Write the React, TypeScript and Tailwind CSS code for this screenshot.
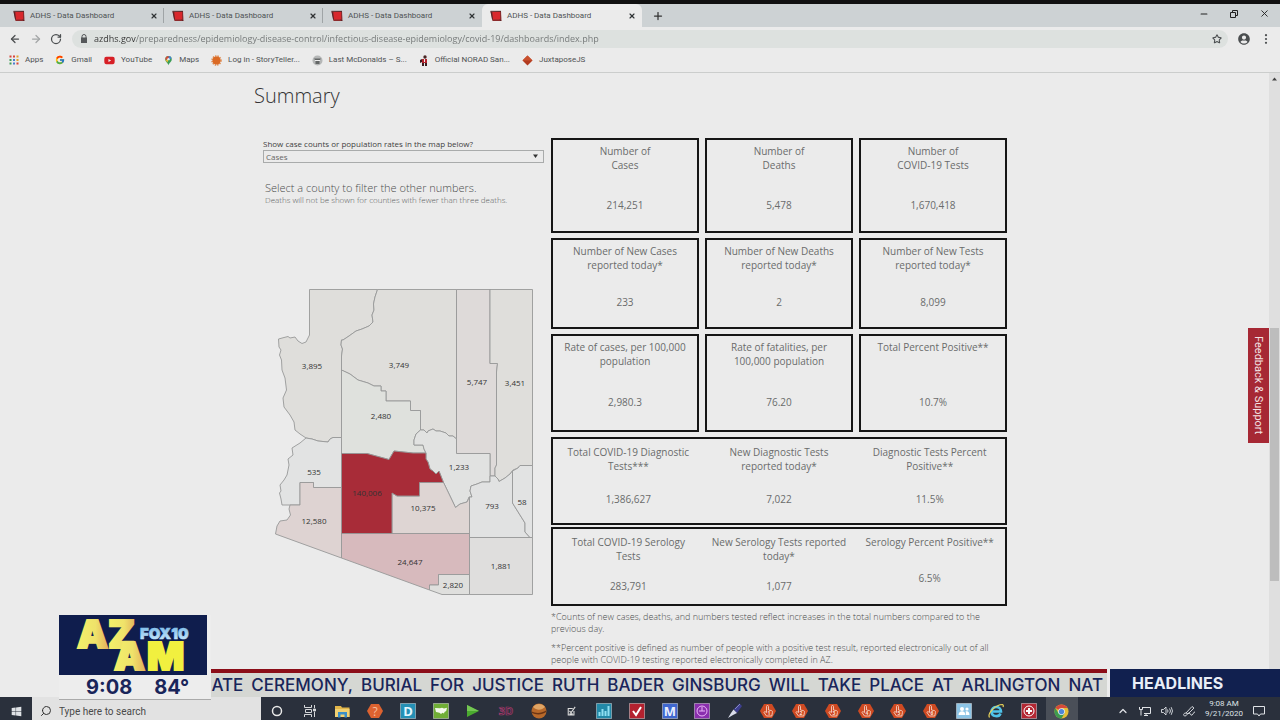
import type { ReactNode } from 'react';
import { ArrowLeft, ArrowRight, ChevronUp, Minus, Plus, RotateCw, Search, Star, X } from 'lucide-react';
import { FcGoogle } from 'react-icons/fc';
import { FaYoutube, FaWindows, FaUserCircle } from 'react-icons/fa';

/* ---------- browser chrome ---------- */

function AdhsIcon() {
  return (
    <svg className="size-3 shrink-0" viewBox="0 0 12 12" aria-hidden="true">
      <path d="M.5 1.500L11 1l.5 10H10L2.500 11z" fill="#8d2a2c" />
      <path d="M2.500 2h7.500v7.500H3z" fill="#d8282d" />
      <path d="M1 1.500l1.500 8M.5 1.300h10.500M10 9.500l1 1.500" stroke="#4a2022" strokeWidth=".8" fill="none" />
    </svg>
  );
}

function Tab({ active }: { active?: boolean }) {
  return (
    <div
      role="tab"
      aria-selected={!!active}
      className={
        active
          ? 'flex w-40 items-center gap-1 rounded-t-md bg-[#ebebeb] pt-px pr-1.5 pl-2'
          : 'flex w-[159px] items-center gap-1 pt-px pr-1.5 pl-2'
      }
    >
      <AdhsIcon />
      <span className="flex-1 truncate pl-px text-[8px] leading-3 text-[#4f5355]">ADHS - Data Dashboard</span>
      <button aria-label="Close tab" className="text-[#303335]">
        <X className="size-2" strokeWidth={3.500} />
      </button>
    </div>
  );
}

function TabStrip() {
  return (
    <div className="flex h-[23px] shrink-0 items-stretch bg-[#cdd2d4] pl-[5px] font-[Roboto,sans-serif]">
      <div role="tablist" className="flex">
        <Tab />
        <span className="-ml-px my-1 w-px bg-[#9fa4a6]" />
        <Tab />
        <span className="-ml-px my-1 w-px bg-[#9fa4a6]" />
        <Tab />
        <Tab active />
      </div>
      <button aria-label="New tab" className="ml-2.5 text-[#333]">
        <Plus className="size-3" strokeWidth={2.500} />
      </button>
      <div className="ml-auto flex items-center gap-5 pr-2.5 pb-1 text-[#222]">
        <button aria-label="Minimize"><Minus width={10} height={10} strokeWidth={2.500} /></button>
        <button aria-label="Restore">
          <svg width="10" height="10" viewBox="0 0 10 10" fill="none" stroke="currentColor" aria-hidden="true">
            <path d="M1.500 3.500h5v5h-5zM3.500 3V1.500h5v5H7" />
          </svg>
        </button>
        <button aria-label="Close window"><X width={11} height={11} strokeWidth={2} /></button>
      </div>
    </div>
  );
}

const URL_TEXT =
  'azdhs.gov/preparedness/epidemiology-disease-control/infectious-disease-epidemiology/covid-19/dashboards/index.php';

function AddressBar() {
  return (
    <div className="flex h-[23px] shrink-0 items-center bg-[#ebebeb] pl-2 text-[#4b4e50]">
      <button aria-label="Back" className="px-px"><ArrowLeft className="size-3" strokeWidth={2.500} /></button>
      <button aria-label="Forward" className="ml-2 text-[#a3a6a7]"><ArrowRight className="size-3" strokeWidth={2.500} /></button>
      <button aria-label="Reload" className="ml-2"><RotateCw className="size-3" strokeWidth={2.500} /></button>
      <div className="ml-2.5 flex h-[18px] flex-1 items-center rounded-full bg-[#dde1df] pr-1.5 pl-2">
        <svg width="8" height="9" viewBox="0 0 8 9" aria-hidden="true">
          <path d="M2 4V2.500a2 2 0 0 1 4 0V4" fill="none" stroke="#55585a" />
          <path d="M1 3.500h6V9H1z" fill="#55585a" />
        </svg>
        <input
          aria-label="Address"
          defaultValue={URL_TEXT}
          className="ml-1.5 min-w-0 flex-1 bg-linear-[to_right,#333_42px,#727676_42px] bg-clip-text text-[9px] text-transparent outline-none"
        />
        <button aria-label="Bookmark this page"><Star className="size-2.5" strokeWidth={2.500} /></button>
      </div>
      <button aria-label="Profile" className="ml-2.5"><FaUserCircle className="size-3" /></button>
      <button aria-label="Menu" className="mr-3 ml-3.5">
        <svg width="4" height="10" viewBox="0 0 4 10" fill="currentColor" aria-hidden="true">
          <circle cx="2" cy="1.200" r="1.100" /><circle cx="2" cy="5" r="1.100" /><circle cx="2" cy="8.800" r="1.100" />
        </svg>
      </button>
    </div>
  );
}

function AppsIcon() {
  const colors = ['#d8453a', '#d8453a', '#e0a12c', '#3f9a54', '#4a7fd0', '#e0a12c', '#3f9a54', '#4a7fd0', '#d8453a'];
  return (
    <svg width="10" height="10" viewBox="0 0 10 10" aria-hidden="true">
      {colors.map((c, i) => (
        <rect key={i} x={(i % 3) * 3.500 + 0.500} y={Math.floor(i / 3) * 3.500 + 0.500} width="2" height="2" fill={c} />
      ))}
    </svg>
  );
}

function MapsIcon() {
  return (
    <svg width="9" height="11" viewBox="0 0 10 11" aria-hidden="true">
      <path d="M5 .5a3.600 3.600 0 0 1 3.600 3.600C8.600 7 6 7.500 5 10.800 4 7.500 1.400 7 1.400 4.100A3.600 3.600 0 0 1 5 .5z" fill="#3c9d55" />
      <path d="M5 .5a3.600 3.600 0 0 1 3.400 2.400L5 5z" fill="#4580db" />
      <path d="M5 .5L5 4 1.400 4.600C1.200 2.300 3 .5 5 .5z" fill="#d9483b" />
      <path d="M1.700 5.500L5 3.500 4 7.800z" fill="#e9b92f" />
      <circle cx="5" cy="4" r="1.300" fill="#ebebeb" />
    </svg>
  );
}

const bookmarks: { label: string; icon: ReactNode }[] = [
  { label: 'Apps', icon: <AppsIcon /> },
  { label: 'Gmail', icon: <FcGoogle size={10} /> },
  { label: 'YouTube', icon: <FaYoutube size={11} color="#d71f26" /> },
  { label: 'Maps', icon: <MapsIcon /> },
  {
    label: 'Log in - StoryTeller...',
    icon: (
      <svg width="11" height="11" viewBox="0 0 11 11" aria-hidden="true">
        <circle cx="5.500" cy="5.500" r="4.500" fill="none" stroke="#dc8a50" strokeWidth="1.500" strokeDasharray="1.400 1" />
        <circle cx="5.500" cy="5.500" r="4" fill="#db6a25" />
      </svg>
    ),
  },
  {
    label: 'Last McDonalds – S...',
    icon: (
      <svg width="11" height="11" viewBox="0 0 11 11" aria-hidden="true">
        <circle cx="5.500" cy="5.500" r="5" fill="#b5b7b7" />
        <path d="M2 3.500h7L8 5H3zM3.500 6h4v3h-4z" fill="#646767" />
        <path d="M3 5.500h5" stroke="#eee" />
      </svg>
    ),
  },
  {
    label: 'Official NORAD San...',
    icon: (
      <svg width="10" height="11" viewBox="0 0 10 11" aria-hidden="true">
        <circle cx="6" cy="2" r="1.700" fill="#4a2524" />
        <path d="M3 4h5v4H3z" fill="#b3222c" />
        <path d="M1 5l2-1v3l-2 1zM3 8h2v3H3zM6 8h2v3H6z" fill="#3a1c20" />
        <path d="M5 4h1v3H5z" fill="#eee" />
      </svg>
    ),
  },
  {
    label: 'JuxtaposeJS',
    icon: (
      <svg width="11" height="11" viewBox="0 0 11 11" aria-hidden="true">
        <path d="M5.500 .5l5 5-5 5-5-5z" fill="#b23a1f" />
        <path d="M5.500 .5l5 5h-10z" fill="#c9502d" />
      </svg>
    ),
  },
];

function Bookmarks() {
  return (
    <nav aria-label="Bookmarks" className="flex h-[23px] shrink-0 items-start gap-3 border-b border-[#cbcdcc] bg-[#ebebeb] pt-[3px] pl-[9px] font-[Roboto,sans-serif]">
      {bookmarks.map((b) => (
        <a key={b.label} href="#" className="flex h-3.5 items-center gap-1.5 text-[8px] whitespace-nowrap text-[#4f5254]">
          {b.icon}
          {b.label}
        </a>
      ))}
    </nav>
  );
}

/* ---------- county map ---------- */

const counties: { name: string; value: string; x: number; y: number; fill: string; d: string }[] = [
  { name: 'Mohave', value: '3,895', x: 312, y: 366, fill: '#dfdedb', d: 'M309.500 289.500H377.500L375 297 373.500 304 374 310 372 315 373 322 369 326 362 329 356 331 349 336 343 340 341.500 340 341 345 342.500 349 341.500 356 341.500 370V437.500H333L330 439 328 442 318 441 312 439 306 438 300 434 295 430 294 422 290 415 284 407 283 398 286.500 390 285 378 282 370 281.500 360 279.500 355 281 350 279 347 278.500 339 284 337.500 288 336.500 290 338 295 337 298 341 302 343.500 306 342 309.500 335Z' },
  { name: 'Coconino', value: '3,749', x: 399, y: 365, fill: '#dfdedb', d: 'M377.500 289.500H456.500V439L453 436 449 436 446 433 440 431 436 431 433 429 428 431 427 433 424 430 420.500 430V410.500H410.500V401H386V391H381V386L374 386 368 383 358 380 350 374 341.500 370V356L342.500 349 341 345 341.500 340 343 340 349 336 356 331 362 329 369 326 373 322 372 315 374 310 373.500 304 375 297Z' },
  { name: 'Navajo', value: '5,747', x: 477, y: 382, fill: '#dedad9', d: 'M456.500 289.500H490V363.500H497.500L496.500 372V465L495 468V476H490V453.500H456.500Z' },
  { name: 'Apache', value: '3,451', x: 515, y: 383, fill: '#dfdedb', d: 'M490 289.500H532.500V465.500H520L518 468 513 470 510 474 505 478 499 481.500 498 479 495 476V468L496.500 465V372L497.500 363.500H490Z' },
  { name: 'Yavapai', value: '2,480', x: 381, y: 416, fill: '#dfe1dd', d: 'M341.500 370L350 374 358 380 368 383 374 386H381V391H386V401H410.500V410.500H420.500V430L416 434 414 440V445H423L424 449 426 453H413L394 451 389 459.500 367 453.500H341.500Z' },
  { name: 'Gila', value: '1,233', x: 459, y: 467, fill: '#e1e2e1', d: 'M420.500 430L424 430 427 433 428 431 433 429 436 431 440 431 446 433 449 436 453 436 456.500 439V453.500H490V482L482 482 477 484 471 486 470 491 472 497 469 497 467 502 460 504 455.500 507.500 450 496 443.500 482.500 439 471 436 474 430 469 428 462 426 459V453L424 449 423 445H414V440L416 434Z' },
  { name: 'La Paz', value: '535', x: 314, y: 472, fill: '#e2e3e3', d: 'M306 438L312 439 318 441 328 442 330 439 333 437.500H341.500V487.500H313.500V482.500H300V505H282L281 499 279.500 493 281 491 280 485 284 480 287 475 289 465 288 459 293 455 292 448 300 443Z' },
  { name: 'Yuma', value: '12,580', x: 314, y: 521, fill: '#ded3d2', d: 'M300 482.500H313.500V487.500H341.500V558L275.500 534 277 526 280 521 287 520 290.500 515 289 509 290 505H300Z' },
  { name: 'Pinal', value: '10,375', x: 423, y: 508, fill: '#ded5d3', d: 'M392 493L397 496H419.500V482.500H443.500L450 496 455.500 507.500 460 504 467 502 469.500 497V533.500H392Z' },
  { name: 'Graham', value: '793', x: 492, y: 506, fill: '#e1e2e2', d: 'M469.500 537.500V497H472L470 491 471 486 477 484 482 482H490V476H495L498 479 499 481.500 505 478 510 474 512.500 471V503L520 515 525 523 525 532 530 537.500Z' },
  { name: 'Greenlee', value: '58', x: 522, y: 502, fill: '#e2e3e3', d: 'M520 465.500H532.500V537.500H530L525 532V523L520 515 512.500 503V471L518 468Z' },
  { name: 'Pima', value: '24,647', x: 410, y: 562, fill: '#d7babd', d: 'M341.500 533.500H469.500V574.500H438.500V585H429.500V590L341.500 558Z' },
  { name: 'Cochise', value: '1,881', x: 501, y: 566, fill: '#dfdedd', d: 'M469.500 537.500H532.500V594.500H469.500Z' },
  { name: 'Santa Cruz', value: '2,820', x: 453, y: 585, fill: '#dfdfdd', d: 'M438.500 574.500H469.500V594.500H442L429.500 590V585H438.500Z' },
  { name: 'Maricopa', value: '140,006', x: 367, y: 493, fill: '#a82c38', d: 'M341.500 453.500H367L389 459.500 394 451 413 453H426V459L428 462 430 469 433 471 436 474 439 471 443.500 482.500H419.500V496H397L392 493V533.500H341.500Z' },
];

function CountyMap() {
  return (
    <svg role="img" aria-label="Cases by county" className="ml-5 block w-[260px]" viewBox="274 288 260 308">
      {counties.map((c) => (
        <path key={c.name} d={c.d} fill={c.fill} stroke="#979998" strokeWidth="0.900" />
      ))}
      {counties.map((c) => (
        <text key={c.name} x={c.x} y={c.y + 3} textAnchor="middle" className="fill-[#333] text-[8px]">
          {c.value}
        </text>
      ))}
    </svg>
  );
}

/* ---------- dashboard ---------- */

function Stat({ title, value, gap }: { title: string[]; value: string; gap: string }) {
  return (
    <>
      <h2>
        {title.map((line) => (
          <span key={line} className="block whitespace-nowrap">{line}</span>
        ))}
      </h2>
      <p className={gap}>{value}</p>
    </>
  );
}

function Card({ title, value, size, gap }: { title: string[]; value: string; size: string; gap: string }) {
  return (
    <section className={`border-2 border-[#151515] pt-1 text-center ${size}`}>
      <Stat title={title} value={value} gap={gap} />
    </section>
  );
}

function Summary() {
  return (
    <main className="mx-auto flex w-full max-w-[761px] flex-col text-[#6a6c6c]">
      <h1 className="mt-[9px] text-[20px] leading-7 font-light text-[#333]">Summary</h1>
      <div className="mt-7 flex">
        <div className="w-[297px] shrink-0">
          <div className="ml-[9px] w-[281px]">
            <label htmlFor="measure" className="block text-[8px] leading-3 text-[#3f4141]">
              Show case counts or population rates in the map below?
            </label>
            <div className="relative">
              <select
                id="measure"
                className="block h-[13px] w-full appearance-none border border-[#a9abab] pl-0.5 text-[8px] leading-[11px] text-[#666]"
              >
                <option>Cases</option>
                <option>Rates</option>
              </select>
              <svg className="pointer-events-none absolute top-1 right-1.5" width="5" height="4" viewBox="0 0 5 4" aria-hidden="true">
                <path d="M0 .5h5L2.500 4z" fill="#333" />
              </svg>
            </div>
            <p className="mt-[18px] ml-0.5 text-[11px] leading-[14px] font-light text-[#4c4e4e]">Select a county to filter the other numbers.</p>
            <p className="ml-0.5 text-[8px] leading-[10px] font-light whitespace-nowrap text-[#5c5e5e]">
              Deaths will not be shown for counties with fewer than three deaths.
            </p>
          </div>
          <div className="mt-[83px]">
            <CountyMap />
          </div>
        </div>

        <div className="w-[456px] shrink-0 text-[10px] leading-[14px]">
          <div className="grid grid-cols-3 gap-x-1.5 gap-y-[5px]">
            <Card title={['Number of', 'Cases']} value="214,251" size="h-[95px]" gap="mt-[26px]" />
            <Card title={['Number of', 'Deaths']} value="5,478" size="h-[95px]" gap="mt-[26px]" />
            <Card title={['Number of', 'COVID-19 Tests']} value="1,670,418" size="h-[95px]" gap="mt-[26px]" />
            <Card title={['Number of New Cases', 'reported today*']} value="233" size="h-[91px]" gap="mt-[23px]" />
            <Card title={['Number of New Deaths', 'reported today*']} value="2" size="h-[91px]" gap="mt-[23px]" />
            <Card title={['Number of New Tests', 'reported today*']} value="8,099" size="h-[91px]" gap="mt-[23px]" />
            <Card title={['Rate of cases, per 100,000', 'population']} value="2,980.3" size="h-[98px]" gap="mt-[27px]" />
            <Card title={['Rate of fatalities, per', '100,000 population']} value="76.20" size="h-[98px]" gap="mt-[27px]" />
            <Card title={['Total Percent Positive**']} value="10.7%" size="h-[98px]" gap="mt-[41px]" />
          </div>
          <section className="mt-[5px] grid h-[88px] grid-cols-3 border-2 border-[#151515] pt-1.5 text-center">
            <div><Stat title={['Total COVID-19 Diagnostic', 'Tests***']} value="1,386,627" gap="mt-[19px]" /></div>
            <div><Stat title={['New Diagnostic Tests', 'reported today*']} value="7,022" gap="mt-[19px]" /></div>
            <div><Stat title={['Diagnostic Tests Percent', 'Positive**']} value="11.5%" gap="mt-[19px]" /></div>
          </section>
          <section className="mt-0.5 grid h-[79px] grid-cols-3 border-2 border-[#151515] pt-1.5 text-center">
            <div><Stat title={['Total COVID-19 Serology', 'Tests']} value="283,791" gap="mt-4" /></div>
            <div><Stat title={['New Serology Tests reported', 'today*']} value="1,077" gap="mt-4" /></div>
            <div><Stat title={['Serology Percent Positive**']} value="6.5%" gap="mt-[22px]" /></div>
          </section>
          <div className="mt-[5px] text-[9px] leading-3 font-light text-[#4c4e4e]">
            <p>*Counts of new cases, deaths, and numbers tested reflect increases in the total numbers compared to the previous day.</p>
            <p className="mt-[7px]">
              **Percent positive is defined as number of people with a positive test result, reported electronically out of all people with COVID-19 testing reported electronically completed in AZ.
            </p>
          </div>
        </div>
      </div>
    </main>
  );
}

/* ---------- broadcast graphics ---------- */

function Ticker() {
  const words = 'ATE CEREMONY, BURIAL FOR JUSTICE RUTH BADER GINSBURG WILL TAKE PLACE AT ARLINGTON NAT'.split(' ');
  return (
    <div className="absolute right-0 bottom-[23px] left-[211px] flex h-7 font-[Inter,sans-serif]">
      <div className="flex min-w-0 flex-1 items-center justify-end gap-2 overflow-hidden border-t-4 border-[#8b0d18] bg-[#d5d7d3] pr-1 text-[17px] leading-6 font-medium text-[#19255a]">
        {words.map((w) => (
          <span key={w}>{w}</span>
        ))}
      </div>
      <div className="w-[3px] bg-[#ececec]" />
      <div className="flex w-[170px] shrink-0 items-center bg-[#11204f] pl-[22px] text-[16px] font-bold text-[#e9eef8]">HEADLINES</div>
    </div>
  );
}

function StationBug() {
  return (
    <div className="absolute bottom-5 left-[59px] w-[152px] border-b border-[#aaa] bg-[#ededed] font-[Inter,sans-serif]">
      <svg className="block w-[148px] bg-[#0f1d4d]" viewBox="0 0 148 60" role="img" aria-label="AZ AM FOX10">
        <defs>
          <linearGradient id="gold" x1="0" y1="0" x2="1" y2="0">
            <stop offset="0" stopColor="#f3f06a" />
            <stop offset="0.600" stopColor="#efe26a" />
            <stop offset="1" stopColor="#e3b25c" />
          </linearGradient>
          <linearGradient id="ice" x1="0" y1="0" x2="0" y2="1">
            <stop offset="0" stopColor="#6fb2e4" />
            <stop offset="1" stopColor="#d4efff" />
          </linearGradient>
        </defs>
        <g fontWeight="900" fontSize="39" fill="url(#gold)" stroke="url(#gold)" strokeWidth="2">
          <text x="18" y="33">A</text>
          <text x="49" y="33">Z</text>
          <text x="55" y="55">A</text>
          <text x="88" y="55" fill="#f1f03f" stroke="#f1f03f">M</text>
        </g>
        <text x="81" y="24" fontSize="15" fontWeight="900" fill="url(#ice)" stroke="url(#ice)" strokeWidth=".6">FOX10</text>
      </svg>
      <div className="flex h-6 items-center gap-[22px] pl-[27px] text-[20px] font-bold text-[#19255a]">
        <span>9:08</span>
        <span>84°</span>
      </div>
    </div>
  );
}

/* ---------- taskbar ---------- */

function Tile({ from, children }: { from: string; children: ReactNode }) {
  return (
    <svg width="16" height="16" viewBox="0 0 16 16" fill="none" aria-hidden="true">
      <rect x=".5" y=".5" width="15" height="15" fill={from} stroke="#ffffff66" />
      {children}
    </svg>
  );
}

function HexHand({ n }: { n: string }) {
  return (
    <svg width="16" height="16" viewBox="0 0 16 16" fill="none" aria-hidden="true">
      <path d="M4 1h8l4 7-4 7H4L0 8z" fill="#cf4a22" />
      <path d="M6.500 9V3.500a1 1 0 0 1 2 0V7l3 .6c1 .3 1 1 .9 2L11.800 13H6.500L4 9.500c0-1 1-1.200 2.500 0z" stroke="#f6cfc0" strokeWidth=".9" />
      <text x="7.500" y="12" fontSize="5" fontWeight="700" fill="#f9ded3">{n}</text>
    </svg>
  );
}

const apps: { name: string; icon: ReactNode }[] = [
  { name: 'Cortana', icon: <svg width="12" height="12" viewBox="0 0 12 12" aria-hidden="true"><circle cx="6" cy="6" r="4.500" fill="none" stroke="#e8e8e8" strokeWidth="1.500" /></svg> },
  { name: 'Task View', icon: <svg width="12" height="12" viewBox="0 0 12 12" fill="none" stroke="#d5d7da" aria-hidden="true"><path d="M.5 0v2.500h7V0M1.500 4.500h6v3h-6zM.5 12V9.500h7V12M10.500 0v3M10.500 7v5" /><path d="M9.500 4h2v2h-2z" fill="#d5d7da" /></svg> },
  { name: 'File Explorer', icon: <svg width="15" height="13" viewBox="0 0 15 13" aria-hidden="true"><path d="M0 1h6l1 1.500h7.500V12H0z" fill="#e2b64a" /><path d="M0 4h14.500v8H0z" fill="#f2d172" /><path d="M3 7h9v5.500H9.500V9.500h-4v3H3z" fill="#3a8fc8" /></svg> },
  { name: 'Help', icon: <svg width="16" height="16" viewBox="0 0 16 16" aria-hidden="true"><path d="M4 1h8l4 7-4 7H4L0 8z" fill="#dc6230" /><text x="8" y="12.500" textAnchor="middle" fontSize="12" fill="#f6bf9f">?</text></svg> },
  { name: 'Dashboard D', icon: <Tile from="#2590b5"><text x="8" y="13" textAnchor="middle" fontSize="13" fontWeight="700" fill="#e4f8ff">D</text></Tile> },
  { name: 'Maps US', icon: <Tile from="#6fae35"><path d="M2 5l5 .3 2-.6 2 .8 3-.8-.8 3.300-1.700 1-.5 1.500-1.500-.8-1.500 1.300-1.500-1.200L3 9z" fill="#f3f9ea" /></Tile> },
  { name: 'Player', icon: <svg width="14" height="14" viewBox="0 0 14 14" aria-hidden="true"><path d="M1 1l12 6L1 13z" fill="#4aa92f" /><path d="M1 1l12 6H1z" fill="#74c653" /></svg> },
  { name: '3D', icon: <svg width="16" height="14" viewBox="0 0 16 14" aria-hidden="true"><text x="8" y="11" textAnchor="middle" fontSize="11" fontWeight="700" fill="#3b2238" stroke="#a0406f" strokeWidth=".7">3D</text></svg> },
  { name: 'Globe', icon: <svg width="16" height="16" viewBox="0 0 16 16" aria-hidden="true"><circle cx="8" cy="8" r="7.500" fill="#b8692a" /><path d="M2 4a7.500 7.500 0 0 1 12 0C11 7 6 8 2 4z" fill="#e0a565" /><path d="M.6 8.500c4 2 10 2 14.500-1v1.500c-4 3-10 3-14.300 1z" fill="#6b3413" /></svg> },
  { name: 'Checklist', icon: <svg width="9" height="10" viewBox="0 0 11 12" fill="none" stroke="#dcdcdc" strokeWidth="1.300" aria-hidden="true"><path d="M7 3H1.500v8h7V6M3 6l2 2 5-7M3 9.500h4" /></svg> },
  { name: 'Charts', icon: <Tile from="#2289a8"><path d="M3.500 13V9M6.500 13V6M9.500 13V8M12.500 13V3" stroke="#8fe0f2" strokeWidth="2" /></Tile> },
  { name: 'Tasks', icon: <Tile from="#b3212f"><path d="M4 8l3 4 5-8" stroke="#fff" strokeWidth="2" /></Tile> },
  { name: 'Mail M', icon: <Tile from="#3f67cf"><text x="8" y="13" textAnchor="middle" fontSize="13" fontWeight="700" fill="#e9efff">M</text></Tile> },
  { name: 'Clock', icon: <Tile from="#8a2fae"><circle cx="8" cy="8" r="5" stroke="#e9b6f7" /><path d="M8 4v4M5 8h6" stroke="#e9b6f7" /></Tile> },
  { name: 'Pen', icon: <svg width="16" height="16" viewBox="0 0 16 16" aria-hidden="true"><path d="M6.500 6.500l6-6 2.500 2.500-5 7z" fill="#3d3f8f" /><path d="M8 6l5-5" stroke="#8688c4" /><path d="M6.500 6.500l3.500 3.500-4 2-5 3 3-5z" fill="#d9dcea" /></svg> },
  { name: 'Touch 1', icon: <HexHand n="1" /> },
  { name: 'Touch 2', icon: <HexHand n="2" /> },
  { name: 'Touch 3', icon: <HexHand n="3" /> },
  { name: 'Touch 4', icon: <HexHand n="4" /> },
  { name: 'Touch 5', icon: <HexHand n="5" /> },
  { name: 'Touch 6', icon: <HexHand n="6" /> },
  { name: 'People', icon: <Tile from="#8cc4e6"><circle cx="6" cy="6" r="2" fill="#fff" /><path d="M2.500 12c0-5 7-5 7 0z" fill="#fff" /><circle cx="11" cy="6" r="1.600" fill="#fff" /><path d="M10 12c0-2 0-3-.5-3.500 2-1 4 0 4 3.500z" fill="#fff" /></Tile> },
  { name: 'Internet Explorer', icon: <svg width="16" height="16" viewBox="0 0 16 16" fill="none" aria-hidden="true"><path d="M3.500 8.500h9.500c0-6-9.500-6-9.500 0 0 5.500 7.500 6 9 2" stroke="#4fc3ea" strokeWidth="2.600" /><path d="M1.500 14.500C-1 10 8 1.500 14.500 1.500c1.500.5.500 2.500.5 2.500" stroke="#e8d35a" strokeWidth="1.200" /></svg> },
  { name: 'Rescue', icon: <Tile from="#b32733"><circle cx="8" cy="8" r="5" stroke="#fff" /><path d="M8 5v6M5 8h6" stroke="#fff" strokeWidth="2" /></Tile> },
  { name: 'Chrome', icon: <svg width="15" height="15" viewBox="0 0 16 16" aria-hidden="true"><circle cx="8" cy="8" r="7.500" fill="#e5bd35" /><path d="M8 8L1.500 4.250A7.500 7.500 0 0 1 14.500 4.250H8z" fill="#d64a3a" /><path d="M1.500 4.250A7.500 7.500 0 0 0 8 15.500l3.250-5.600L8 8 4.750 9.900z" fill="#3d9b50" /><circle cx="8" cy="8" r="3.600" fill="#e8eef5" /><circle cx="8" cy="8" r="2.800" fill="#4d86d8" /></svg> },
];

function Taskbar() {
  return (
    <footer className="h-[23px] shrink-0 overflow-hidden bg-[#2a303c] text-[#dfe2e6]">
      <div className="flex h-7 items-stretch">
        <button aria-label="Start" className="flex w-8 shrink-0 items-center justify-center"><FaWindows size={11} /></button>
        <label className="flex w-[229px] shrink-0 items-center bg-[#e2e2e2] pl-2 text-[#333]">
          <Search className="size-3 -scale-x-100" strokeWidth={2} />
          <input
            aria-label="Search"
            placeholder="Type here to search"
            className="ml-[7px] min-w-0 flex-1 font-[Roboto,sans-serif] text-[10px] outline-none placeholder:text-[#4a4a4a]"
          />
        </label>
        <div className="flex w-[817px] shrink-0">
          {apps.map((a) => (
            <button
              key={a.name}
              aria-label={a.name}
              className={
                a.name === 'Chrome'
                  ? 'flex flex-1 items-center justify-center bg-[#4a4f58]'
                  : 'flex flex-1 items-center justify-center'
              }
            >
              {a.icon}
            </button>
          ))}
        </div>
        <div className="ml-auto flex items-center gap-2.5">
          <button aria-label="Show hidden icons"><ChevronUp className="size-3" strokeWidth={2.500} /></button>
          <button aria-label="Network">
            <svg width="12" height="11" viewBox="0 0 12 11" fill="none" stroke="currentColor" aria-hidden="true">
              <path d="M3 1.500h8.500v6H5M7 7.500v2M5 9.500h4M.5 1v2.500h3V1M2 3.500v6" />
            </svg>
          </button>
          <button aria-label="Volume">
            <svg width="12" height="10" viewBox="0 0 12 10" fill="none" stroke="currentColor" strokeWidth=".9" aria-hidden="true">
              <path d="M.5 3.500h2l2.500-2.500v8L2.500 6.500h-2zM6.500 3.500q1 1.500 0 3M8.500 2.500q2 2.500 0 5M10.200 1.200q2.600 3.800 0 7.600" />
            </svg>
          </button>
          <button aria-label="Pen workspace">
            <svg width="12" height="12" viewBox="0 0 12 12" fill="none" stroke="currentColor" strokeWidth=".9" aria-hidden="true">
              <path d="M3 8l6-6.500L11 3 5 9zM3 8c-3 0-3 3-1 3s2-3 4-3 1 3 3 2 1-3 3-3" />
            </svg>
          </button>
          <button className="w-[38px] self-start pt-0.5 text-center font-[Roboto,sans-serif] text-[8px] leading-[10px]">
            <span className="block">9:08 AM</span>
            <span className="block">9/21/2020</span>
          </button>
          <button aria-label="Notifications" className="mr-[15px]">
            <svg width="12" height="12" viewBox="0 0 12 12" fill="none" stroke="currentColor" aria-hidden="true">
              <path d="M.5 1.500h11v7.500H7.500L6 11 4.500 9h-4z" />
            </svg>
          </button>
        </div>
      </div>
    </footer>
  );
}

export default function App() {
  return (
    <div className="relative flex h-screen flex-col overflow-hidden bg-[#ebebeb] font-['Open_Sans',sans-serif]">
      <div className="h-1 shrink-0 bg-[#101010]" />
      <TabStrip />
      <AddressBar />
      <Bookmarks />
      <div className="flex min-h-0 flex-1">
        <div className="relative min-w-0 flex-1 overflow-hidden">
          <Summary />
          <button className="absolute top-[255px] right-0 h-[115px] w-[21px] bg-[#a62834] font-[Roboto,sans-serif] text-[11px] leading-[21px] text-[#f3e3e4] [writing-mode:vertical-rl]">
            Feedback &amp; Support
          </button>
        </div>
        <div className="flex w-[11px] shrink-0 flex-col items-center bg-[#dfdfdf]">
          <svg className="mt-1" width="5" height="4" viewBox="0 0 5 4" aria-hidden="true"><path d="M0 3.500h5L2.500 .5z" fill="#444" /></svg>
          <div className="mt-[247px] h-[253px] w-[9px] bg-[#bdbdbd]" />
        </div>
      </div>
      <Ticker />
      <Taskbar />
      <StationBug />
    </div>
  );
}
